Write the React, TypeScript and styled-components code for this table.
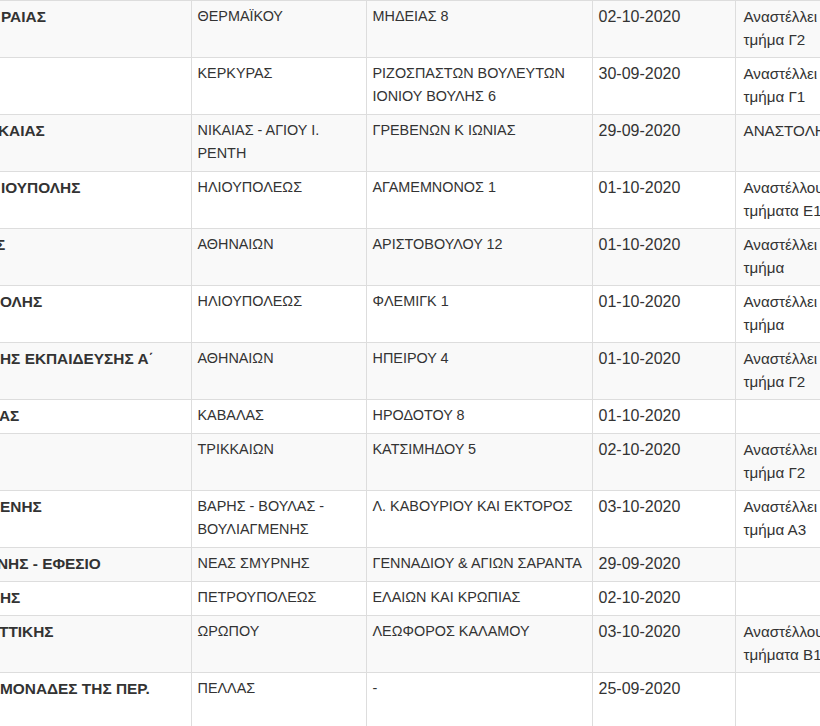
import React from 'react';
import styled, { createGlobalStyle } from 'styled-components';

type Row = {
	name: string;
	shift: number;
	area: string;
	address: string;
	date: string;
	note: string[];
};

const widths = [191, 175, 226, 143, 265];

const rows: Row[] = [
	{ name: 'ΡΑΙΑΣ', shift: 1, area: 'ΘΕΡΜΑΪΚΟΥ', address: 'ΜΗΔΕΙΑΣ 8', date: '02-10-2020', note: ['Αναστέλλει τη λειτουργία του', 'τμήμα Γ2'] },
	{ name: '', shift: 0, area: 'ΚΕΡΚΥΡΑΣ', address: 'ΡΙΖΟΣΠΑΣΤΩΝ ΒΟΥΛΕΥΤΩΝ ΙΟΝΙΟΥ ΒΟΥΛΗΣ 6', date: '30-09-2020', note: ['Αναστέλλει τη λειτουργία του', 'τμήμα Γ1'] },
	{ name: 'ΚΑΙΑΣ', shift: -2, area: 'ΝΙΚΑΙΑΣ - ΑΓΙΟΥ Ι. ΡΕΝΤΗ', address: 'ΓΡΕΒΕΝΩΝ Κ ΙΩΝΙΑΣ', date: '29-09-2020', note: ['ΑΝΑΣΤΟΛΗ ΛΕΙΤΟΥΡΓΙΑΣ'] },
	{ name: 'ΙΟΥΠΟΛΗΣ', shift: 1, area: 'ΗΛΙΟΥΠΟΛΕΩΣ', address: 'ΑΓΑΜΕΜΝΟΝΟΣ 1', date: '01-10-2020', note: ['Αναστέλλουν τη λειτουργία τους τα', 'τμήματα Ε1 και Ε2'] },
	{ name: 'Σ', shift: -4, area: 'ΑΘΗΝΑΙΩΝ', address: 'ΑΡΙΣΤΟΒΟΥΛΟΥ 12', date: '01-10-2020', note: ['Αναστέλλει τη λειτουργία του', 'τμήμα'] },
	{ name: 'ΟΛΗΣ', shift: 0, area: 'ΗΛΙΟΥΠΟΛΕΩΣ', address: 'ΦΛΕΜΙΓΚ 1', date: '01-10-2020', note: ['Αναστέλλει τη λειτουργία του', 'τμήμα'] },
	{ name: 'ΗΣ ΕΚΠΑΙΔΕΥΣΗΣ Α΄', shift: 0, area: 'ΑΘΗΝΑΙΩΝ', address: 'ΗΠΕΙΡΟΥ 4', date: '01-10-2020', note: ['Αναστέλλει τη λειτουργία του', 'τμήμα Γ2'] },
	{ name: 'ΑΣ', shift: -1, area: 'ΚΑΒΑΛΑΣ', address: 'ΗΡΟΔΟΤΟΥ 8', date: '01-10-2020', note: [''] },
	{ name: '', shift: 0, area: 'ΤΡΙΚΚΑΙΩΝ', address: 'ΚΑΤΣΙΜΗΔΟΥ 5', date: '02-10-2020', note: ['Αναστέλλει τη λειτουργία του', 'τμήμα Γ2'] },
	{ name: 'ΕΝΗΣ', shift: 0, area: 'ΒΑΡΗΣ - ΒΟΥΛΑΣ - ΒΟΥΛΙΑΓΜΕΝΗΣ', address: 'Λ. ΚΑΒΟΥΡΙΟΥ ΚΑΙ ΕΚΤΟΡΟΣ', date: '03-10-2020', note: ['Αναστέλλει τη λειτουργία του', 'τμήμα Α3'] },
	{ name: 'ΝΗΣ - ΕΦΕΣΙΟ', shift: -3, area: 'ΝΕΑΣ ΣΜΥΡΝΗΣ', address: 'ΓΕΝΝΑΔΙΟΥ & ΑΓΙΩΝ ΣΑΡΑΝΤΑ', date: '29-09-2020', note: [''] },
	{ name: 'ΗΣ', shift: 0, area: 'ΠΕΤΡΟΥΠΟΛΕΩΣ', address: 'ΕΛΑΙΩΝ ΚΑΙ ΚΡΩΠΙΑΣ', date: '02-10-2020', note: [''] },
	{ name: 'ΤΤΙΚΗΣ', shift: -1, area: 'ΩΡΩΠΟΥ', address: 'ΛΕΩΦΟΡΟΣ ΚΑΛΑΜΟΥ', date: '03-10-2020', note: ['Αναστέλλουν τη λειτουργία τους τα', 'τμήματα Β1 και Β2'] },
	{ name: 'ΜΟΝΑΔΕΣ ΤΗΣ ΠΕΡ.', shift: 0, area: 'ΠΕΛΛΑΣ', address: '-', date: '25-09-2020', note: ['', ''] },
];

const GlobalStyle = createGlobalStyle`
	html, body {
		margin: 0;
		padding: 0;
		background: #fff;
		overflow: hidden;
	}
	body {
		font-family: 'Liberation Sans', Arial, sans-serif;
		color: #333;
	}
`;

const Page = styled.div`
	width: 820px;
	height: 726px;
	overflow: hidden;
`;

const Table = styled.table`
	border-collapse: collapse;
	table-layout: fixed;
	width: 1000px;
	font-size: 14.4px;
	line-height: 23px;
`;

const Col = styled.col<{ $w: number }>`
	width: ${(p) => p.$w}px;
`;

const Tr = styled.tr`
	&:nth-child(odd) {
		background: #f9f9f9;
	}
`;

const Td = styled.td`
	border: 1px solid #ddd;
	padding: 4px 6px 6px;
	vertical-align: top;
	color: #333;
`;

const NameCell = styled(Td)<{ $shift: number }>`
	border-left: none;
	padding-left: 0;
	overflow: hidden;
	white-space: nowrap;
	font-weight: bold;
	font-size: 15.4px;
	text-indent: ${(p) => p.$shift}px;
`;

const DateCell = styled(Td)`
	font-size: 16px;
`;

const NoteCell = styled(Td)`
	padding-left: 8px;
	white-space: nowrap;
	font-size: 15.2px;
`;

const NoteLine = styled.span`
	display: block;
`;

export default function App() {
	return (
		<Page>
			<GlobalStyle />
			<Table>
				<colgroup>
					{widths.map((w, i) => (
						<Col key={i} $w={w} />
					))}
				</colgroup>
				<tbody>
					{rows.map((r, i) => (
						<Tr key={i}>
							<NameCell $shift={r.shift}>{r.name}</NameCell>
							<Td>{r.area}</Td>
							<Td>{r.address}</Td>
							<DateCell>{r.date}</DateCell>
							<NoteCell>
								{r.note.map((l, j) => (
									<NoteLine key={j}>{l || '\u00a0'}</NoteLine>
								))}
							</NoteCell>
						</Tr>
					))}
				</tbody>
			</Table>
		</Page>
	);
}
